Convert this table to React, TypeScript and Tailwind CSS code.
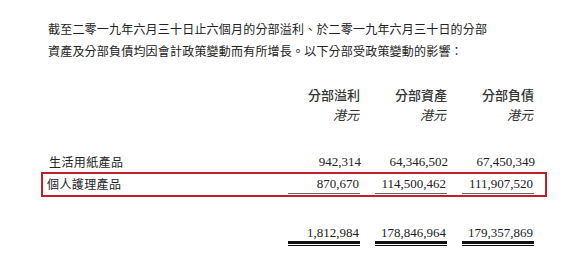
const CJK = "font-['Noto_Sans_CJK_TC',sans-serif]";
const NUM = "font-['Liberation_Serif','Noto_Sans_CJK_TC',serif]";

const rows = [
  { label: '生活用紙產品', values: ['942,314', '64,346,502', '67,450,349'] },
  { label: '個人護理產品', values: ['870,670', '114,500,462', '111,907,520'], highlight: true },
];

const totals = ['1,812,984', '178,846,964', '179,357,869'];
const headers = ['分部溢利', '分部資產', '分部負債'];

function Cells({ values, underline }: { values: string[]; underline?: 'single' | 'double' }) {
  return (
    <div className="flex">
      {values.map((v, i) => (
        <div key={i} className={`w-[72px] ml-[15px] text-right ${NUM} text-[13px] leading-[20px] text-[#222]`}>
          <div className="pr-[1px]">{v}</div>
          {underline === 'single' && <div className="h-[1px] bg-[#666] mt-[-1px]" />}
          {underline === 'double' && (
            <div className="mt-[-2px]">
              <div className="h-[3px] bg-[#111]" />
              <div className="h-[1px] bg-[#111] mt-[1px]" />
            </div>
          )}
        </div>
      ))}
    </div>
  );
}

export default function App() {
  return (
    <div className="w-[573px] h-[277px] bg-white text-[#222] overflow-hidden">
      <div className={`pl-[48px] pt-[18px] pr-[30px] ${CJK} text-[12px] leading-[22px] tracking-[0.2px]`}>
        <p className="whitespace-nowrap">截至二零一九年六月三十日止六個月的分部溢利、於二零一九年六月三十日的分部</p>
        <p className="whitespace-nowrap">資產及分部負債均因會計政策變動而有所增長。以下分部受政策變動的影響：</p>
      </div>

      <div className="pr-[39px] mt-[23px]">
        <div className="flex justify-end">
          {headers.map(h => (
            <div key={h} className="w-[72px] ml-[15px] text-right">
              <div className={`${CJK} text-[13px] leading-[20px] font-medium text-[#333]`}>{h}</div>
              <div className={`${CJK} text-[13px] leading-[20px] italic text-[#333] pr-[1px]`}>港元</div>
            </div>
          ))}
        </div>
      </div>

      <div className="mt-[27px]">
        {rows.map(r => (
          <div
            key={r.label}
            className={
              r.highlight
                ? 'ml-[41px] w-[506px] h-[25px] border-2 border-[#c0202a] flex items-start pr-[11px]'
                : 'ml-[43px] w-[502px] h-[20px] flex items-start pr-[9px]'
            }
          >
            <div
              className={`flex-1 ${r.highlight ? 'pl-[4px]' : 'pl-[6px]'} ${CJK} text-[12px] leading-[20px] tracking-[0.4px]`}
            >
              {r.label}
            </div>
            <Cells values={r.values} underline={r.highlight ? 'single' : undefined} />
          </div>
        ))}
      </div>

      <div className="pr-[39px] mt-[26px] flex justify-end">
        <Cells values={totals} underline="double" />
      </div>
    </div>
  );
}
